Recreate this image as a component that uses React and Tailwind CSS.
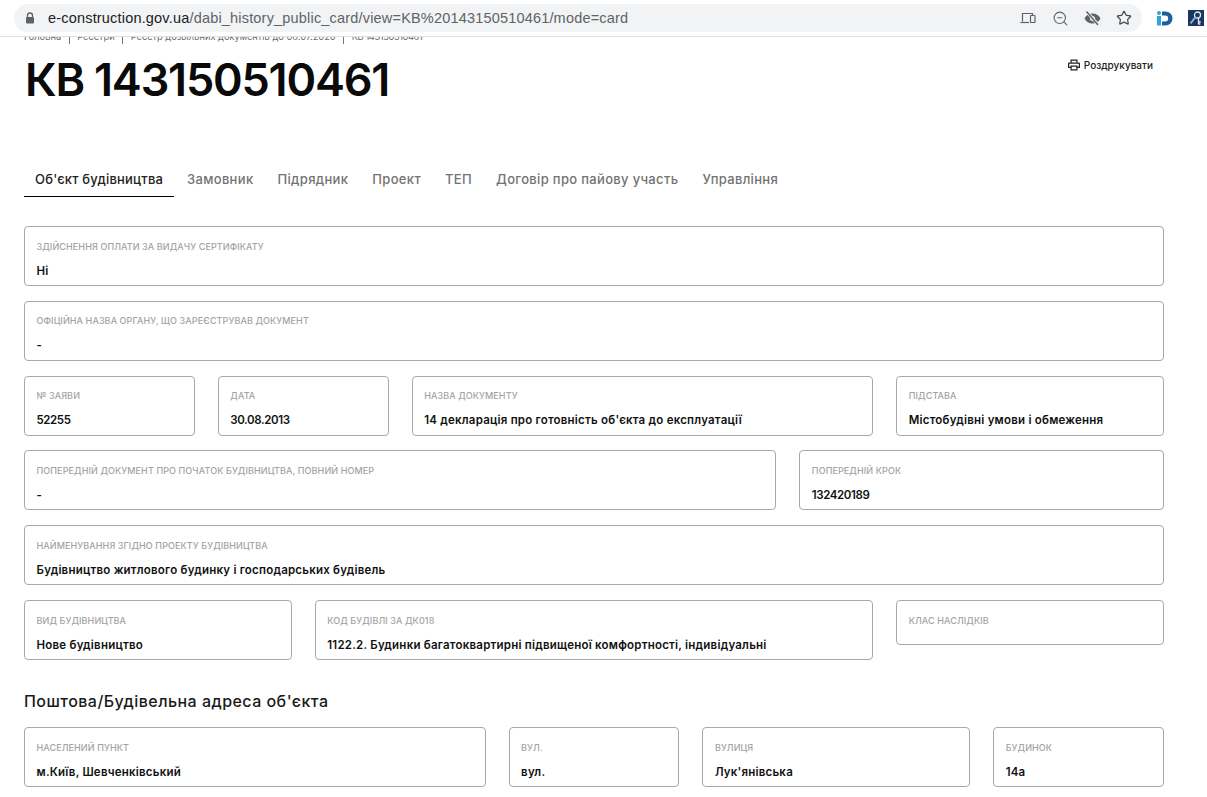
import React from "react";
import { ZoomOut, Star } from "lucide-react";

function Field({ label, value, span, short, num }) {
  return (
    <div className={`${span} ${short ? "h-[45px]" : "h-[60px]"} rounded-[4px] border border-[#a8a8a8] bg-white px-[11.5px] pt-[12.7px]`}>
      <div className="h-[13px] text-[9px] leading-[13px] font-medium uppercase tracking-[0.1px] text-[#a3a3a3] whitespace-nowrap">{label}</div>
      {value && (
        <div className={`mt-[8.9px] text-[11.5px] leading-[18px] font-semibold text-[#111111] whitespace-nowrap ${num ? "tracking-[-0.4px]" : "tracking-[0.22px]"}`}>
          {value}
        </div>
      )}
    </div>
  );
}

function Row({ children }) {
  return <div className="grid grid-cols-12 gap-x-[23px] items-start mb-[14.8px]">{children}</div>;
}

function Sep() {
  return <span className="w-px h-[14px] bg-[#777777] mx-[7.5px]" />;
}

const tabs = ["Замовник", "Підрядник", "Проект", "ТЕП", "Договір про пайову участь", "Управління"];

export default function App() {
  return (
    <div className="w-[1207px] h-[797px] overflow-hidden bg-white font-['Inter','Liberation_Sans',sans-serif]">
      <header className="h-[37px] border-b border-[#dedfe0] flex items-center pl-[14px]">
        <div className="w-[1128px] h-[28px] rounded-full bg-[#f1f3f4] flex items-center pl-[11px] pr-[10px]">
          <svg width="10" height="12" viewBox="0 0 10 12" className="shrink-0">
            <path d="M2.5 5V3.5a2.5 2.5 0 0 1 5 0V5" fill="none" stroke="#5f6368" strokeWidth="1.3" />
            <rect x="1" y="5" width="8" height="6.5" rx="1" fill="#5f6368" />
          </svg>
          <div className="ml-[13px] font-['Liberation_Sans',sans-serif] text-[14.5px] leading-[20px] tracking-[0.185px] whitespace-nowrap text-[#5f6368]">
            <span className="text-[#202124]">e-construction.gov.ua</span>/dabi_history_public_card/view=KB%20143150510461/mode=card
          </div>
          <div className="ml-auto flex items-center text-[#5f6368]">
            <svg width="16" height="14" viewBox="0 0 16 14" fill="none" stroke="#5f6368" strokeWidth="1.2">
              <path d="M2.5 10.5V2.5h10V4" />
              <path d="M0.5 11.5H9" />
              <rect x="10.5" y="4.5" width="4.5" height="7" rx="0.6" />
            </svg>
            <ZoomOut size={17} strokeWidth={1.5} className="ml-[16px]" />
            <svg width="17" height="15" viewBox="0 0 17 15" className="ml-[15px]">
              <path fillRule="evenodd" d="M0.5 7.5C2.2 4.2 5 2.5 8.5 2.5s6.3 1.7 8 5c-1.7 3.3-4.5 5-8 5s-6.3-1.7-8-5zM8.5 5a2.5 2.5 0 1 0 0 5 2.5 2.5 0 0 0 0-5z" fill="#5f6368" />
              <path d="M3 1l11.5 13" stroke="#f1f3f4" strokeWidth="3" />
              <path d="M2.5 0.5 14 14" stroke="#5f6368" strokeWidth="1.5" />
            </svg>
            <Star size={16} strokeWidth={1.8} className="ml-[15px] text-[#45484c]" />
          </div>
        </div>
        <svg width="17" height="15" viewBox="0 0 17 15" className="ml-[14px] shrink-0">
          <rect x="1" y="5" width="4" height="9.5" fill="#2aa6d8" />
          <circle cx="3" cy="2" r="2" fill="#2aa6d8" />
          <path d="M6 0.5h3.5a7 7 0 0 1 0 14H6V10.5h3.2a3 3 0 0 0 0-6H6z" fill="#1c5f9c" />
        </svg>
        <svg width="16" height="16" viewBox="0 0 16 16" className="ml-[15px] shrink-0">
          <rect width="16" height="16" fill="#1a3560" />
          <circle cx="9.5" cy="5" r="3" fill="none" stroke="#dfe7f0" strokeWidth="1.3" />
          <path d="M7.5 7 2.5 13.5" stroke="#8fb0d8" strokeWidth="2" fill="none" />
          <path d="M10.5 8v6.5M10.5 12h2.2M10.5 14h1.8" stroke="#dfe7f0" strokeWidth="1.3" fill="none" />
        </svg>
      </header>

      <main className="px-[24px] w-[1188px] relative">
        <div className="h-[8px] overflow-hidden relative">
          <div className="absolute top-[-7px] left-0 flex items-center text-[9.3px] leading-[12px] text-[#6b6b6b] whitespace-nowrap">
            <span>Головна</span>
            <Sep />
            <span>Реєстри</span>
            <Sep />
            <span>Реєстр дозвільних документів до 06.07.2020</span>
            <Sep />
            <span className="tracking-[-0.4px]">КВ 143150510461</span>
          </div>
        </div>
        <div className="flex items-start justify-between">
          <h1 className="mt-[10px] ml-[1px] text-[45px] leading-[50px] font-semibold tracking-[-1.2px] text-[#0a0a0a] whitespace-nowrap">КВ 143150510461</h1>
          <div className="mt-[13px] mr-[11px] flex items-center gap-[4px] text-[10px] leading-[14px] font-medium text-[#222222]">
            <svg width="12" height="12" viewBox="0 0 12 12" fill="#222222">
              <path fillRule="evenodd" d="M2.5 0.5h7V3.5h1.5a1 1 0 0 1 1 1V9H9.5v2.5h-7V9H0V4.5a1 1 0 0 1 1-1h1.5zM3.7 1.7V3.5h4.6V1.7zM1.2 4.7V7.8h1.3V6.5h7v1.3h1.3V4.7zM3.7 7.7v2.6h4.6V7.7z" />
            </svg>
            <span>Роздрукувати</span>
          </div>
        </div>

        <nav className="mt-[55px] flex text-[13px] leading-[18px] font-medium tracking-[0.2px] text-[#737373] h-[38px]">
          <div className="w-[150px] h-[37px] pl-[11px] pt-[10px] border-b border-black text-[#222222] whitespace-nowrap">Об'єкт будівництва</div>
          <div className="ml-[13px] flex gap-[24px] pt-[10px] whitespace-nowrap tracking-[0.33px]">
            {tabs.map((t) => <span key={t}>{t}</span>)}
          </div>
        </nav>

        <div className="mt-[28px]">
          <Row><Field span="col-span-12" label="Здійснення оплати за видачу сертифікату" value="Ні" /></Row>
          <Row><Field span="col-span-12" label="Офіційна назва органу, що зареєстрував документ" value="-" /></Row>
          <Row>
            <Field span="col-span-2" num label="№ заяви" value="52255" />
            <Field span="col-span-2" num label="Дата" value="30.08.2013" />
            <Field span="col-span-5" label="Назва документу" value="14 декларація про готовність об'єкта до експлуатації" />
            <Field span="col-span-3" label="Підстава" value="Містобудівні умови і обмеження" />
          </Row>
          <Row>
            <Field span="col-span-8" label="Попередній документ про початок будівництва, повний номер" value="-" />
            <Field span="col-span-4" num label="Попередній крок" value="132420189" />
          </Row>
          <Row><Field span="col-span-12" label="Найменування згідно проекту будівництва" value="Будівництво житлового будинку і господарських будівель" /></Row>
          <Row>
            <Field span="col-span-3" label="Вид будівництва" value="Нове будівництво" />
            <Field span="col-span-6" label="Код будівлі за ДК018" value="1122.2. Будинки багатоквартирні підвищеної комфортності, індивідуальні" />
            <Field span="col-span-3" short label="Клас наслідків" />
          </Row>
          <h2 className="mt-[30px] mb-[15px] text-[16px] leading-[22px] font-medium tracking-[0.46px] text-[#1a1a1a]">Поштова/Будівельна адреса об'єкта</h2>
          <Row>
            <Field span="col-span-5" label="Населений пункт" value="м.Київ, Шевченківський" />
            <Field span="col-span-2" label="Вул." value="вул." />
            <Field span="col-span-3" label="Вулиця" value="Лук'янівська" />
            <Field span="col-span-2" label="Будинок" value="14а" />
          </Row>
        </div>
      </main>
    </div>
  );
}
